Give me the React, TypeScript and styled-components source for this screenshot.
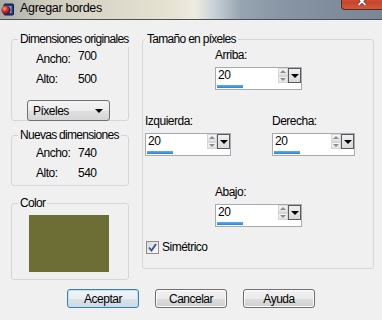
import styled, { createGlobalStyle } from 'styled-components'

const GlobalStyle = createGlobalStyle`
  html, body {
    margin: 0;
    padding: 0;
    background: #f0f0f0;
  }
  body {
    font-family: "Liberation Sans", Arial, sans-serif;
    font-size: 12px;
    letter-spacing: -0.5px;
    color: #000;
  }
  * {
    box-sizing: border-box;
  }
`;

const Window = styled.div`
  width: 382px;
  height: 320px;
  overflow: hidden;
  display: flex;
  flex-direction: column;
  background: #f0f0f0;
`;

const TitleBar = styled.div`
  flex: none;
  height: 20px;
  display: flex;
  align-items: flex-start;
  padding-left: 1px;
  border-bottom: 1px solid #4a5157;
  background: linear-gradient(90deg, #a9aca6 0%, #cfcdbf 12%, #dcd9ca 30%, #e6e3d3 45%, #eeece0 51%, #c9d1d7 56%, #97a5b2 63%, #8694a3 75%, #7e8c9b 88%, #7a8796 100%);
`;

const AppIcon = styled.svg`
  margin-top: 3px;
  margin-right: 6px;
  flex: none;
`;

const TitleText = styled.span`
  margin-top: 1px;
  font-size: 12.5px;
  letter-spacing: -0.3px;
  line-height: 14px;
`;

const CloseButton = styled.div`
  margin-left: auto;
  margin-top: -8px;
  width: 41px;
  height: 18px;
  border: 1px solid #5c2a20;
  border-right: none;
  border-radius: 0 0 0 4px;
  background: linear-gradient(#e08a73, #c7442b 55%, #d0593d);
  display: flex;
  align-items: center;
  justify-content: center;
`;

const Body = styled.div`
  display: grid;
  grid-template-columns: 118px 232px;
  column-gap: 13px;
  padding: 12px 0 0 11px;
`;

const Column = styled.div`
  display: flex;
  flex-direction: column;
`;

const Group = styled.fieldset<{ $h: number; $pad: string; $mt?: number }>`
  margin: ${(p) => p.$mt ?? 0}px 0 0 0;
  height: ${(p) => p.$h}px;
  padding: ${(p) => p.$pad};
  border: 1px solid #d3d7da;
  border-radius: 3px;
  min-width: 0;
`;

const Legend = styled.legend`
  padding: 0 2px;
  line-height: 15px;
  letter-spacing: -0.7px;
  white-space: nowrap;
`;

const InfoRow = styled.div`
  display: grid;
  grid-template-columns: 42px auto;
  height: 20px;
  margin-left: 18px;
  line-height: 15px;
`;

const Value = styled.span<{ $up?: number }>`
  margin-top: ${(p) => -(p.$up ?? 0)}px;
`;

const Select = styled.div`
  margin: 8px 0 0 9px;
  width: 83px;
  height: 21px;
  border: 1px solid #707070;
  border-radius: 3px;
  background: linear-gradient(#f4f4f4 0%, #ececec 50%, #e0e0e0 51%, #d6d6d6 100%);
  display: flex;
  align-items: center;
  padding-left: 5px;
  &::after {
    content: '';
    margin-left: auto;
    margin-right: 6px;
    border-left: 4px solid transparent;
    border-right: 4px solid transparent;
    border-top: 4px solid #000;
  }
`;

const Swatch = styled.div<{ $color: string }>`
  margin-left: 11px;
  width: 80px;
  height: 57px;
  background: ${(p) => p.$color};
`;

const Field = styled.div<{ $ml?: number; $mt?: number }>`
  display: flex;
  flex-direction: column;
  margin-left: ${(p) => p.$ml ?? 0}px;
  margin-top: ${(p) => p.$mt ?? 0}px;
`;

const FieldLabel = styled.span`
  line-height: 15px;
  margin-bottom: 4px;
`;

const FieldRow = styled.div`
  display: flex;
  gap: 41px;
  margin-top: 24px;
`;

const Spin = styled.div<{ $w: number }>`
  width: ${(p) => p.$w}px;
  height: 23px;
  border: 1px solid #a5abb2;
  background: #fff;
  display: flex;
  flex-direction: column;
`;

const SpinTop = styled.div`
  display: flex;
  height: 15px;
`;

const SpinText = styled.span`
  flex: 1;
  padding-left: 2px;
  line-height: 15px;
`;

const Arrows = styled.div`
  width: 10px;
  display: flex;
  flex-direction: column;
`;

const ArrowBtn = styled.div<{ $down?: boolean }>`
  flex: 1;
  border: 1px solid #d6d6d6;
  background: linear-gradient(#f7f7f7, #e2e2e2);
  display: flex;
  align-items: center;
  justify-content: center;
  &::after {
    content: '';
    border-left: 3px solid transparent;
    border-right: 3px solid transparent;
    ${(p) => (p.$down ? 'border-top: 3px solid #8c8c8c;' : 'border-bottom: 3px solid #8c8c8c;')}
  }
`;

const DropBtn = styled.div`
  width: 13px;
  border: 1px solid #5a5a5a;
  background: linear-gradient(#f0f0f0, #d9d9d9);
  display: flex;
  align-items: center;
  justify-content: center;
  &::after {
    content: '';
    border-left: 4px solid transparent;
    border-right: 4px solid transparent;
    border-top: 4px solid #000;
  }
`;

const Bar = styled.div<{ $w: number }>`
  margin: 2px 0 0 1px;
  width: ${(p) => p.$w}px;
  height: 3px;
  background: linear-gradient(#62adf2, #2d7fdb);
`;

const CheckRow = styled.label`
  display: flex;
  align-items: center;
  gap: 3px;
  margin: 13px 0 0 1px;
  line-height: 15px;
`;

const CheckBox = styled.span`
  width: 13px;
  height: 13px;
  border: 1px solid #8e8f8f;
  background: linear-gradient(135deg, #d8d8d8, #fbfbfb);
  display: flex;
  align-items: center;
  justify-content: center;
`;

const Footer = styled.div`
  display: flex;
  justify-content: center;
  gap: 16px;
  padding-top: 9px;
`;

const Button = styled.button<{ $default?: boolean }>`
  width: 72px;
  height: 19px;
  padding: 0;
  font: inherit;
  letter-spacing: inherit;
  color: #000;
  border: 1px solid ${(p) => (p.$default ? '#3c7fb1' : '#707070')};
  border-radius: 3px;
  background: ${(p) =>
    p.$default
      ? 'linear-gradient(#f0f5f9 0%, #e8eef3 50%, #dae3ea 51%, #cfd9e1 100%)'
      : 'linear-gradient(#f2f2f2 0%, #ebebeb 50%, #dddddd 51%, #cfcfcf 100%)'};
  box-shadow: inset 0 0 0 1px ${(p) => (p.$default ? '#bfe1f5' : '#fcfcfc')};
`;

const SpinBox = ({ value, width, bar }: { value: string; width: number; bar: number }) => (
  <Spin $w={width}>
    <SpinTop>
      <SpinText>{value}</SpinText>
      <Arrows>
        <ArrowBtn />
        <ArrowBtn $down />
      </Arrows>
      <DropBtn />
    </SpinTop>
    <Bar $w={bar} />
  </Spin>
);

const App = () => {
  return (
    <Window>
      <GlobalStyle />
      <TitleBar>
        <AppIcon width="13" height="13" viewBox="0 0 13 13">
          <defs>
            <radialGradient id="ball" cx="0.35" cy="0.35" r="0.7">
              <stop offset="0" stopColor="#ff9a6a" />
              <stop offset="0.5" stopColor="#c0282a" />
              <stop offset="1" stopColor="#3a1030" />
            </radialGradient>
          </defs>
          <rect x="3" y="1" width="9.5" height="11" rx="1" fill="#1f3d7a" stroke="#0d1f45" />
          <rect x="5" y="3" width="5.5" height="7" fill="#7fa2d8" />
          <circle cx="5" cy="7" r="4.6" fill="url(#ball)" />
        </AppIcon>
        <TitleText>Agregar bordes</TitleText>
        <CloseButton>
          <svg width="10" height="9" viewBox="0 0 10 9">
            <path d="M1.5 1 L8.5 8 M8.5 1 L1.5 8" stroke="#5a1a10" strokeWidth="3" />
            <path d="M1.5 1 L8.5 8 M8.5 1 L1.5 8" stroke="#fff" strokeWidth="1.8" />
          </svg>
        </CloseButton>
      </TitleBar>

      <Body>
        <Column>
          <Group $h={89} $pad="5px 6px 0 6px">
            <Legend>Dimensiones originales</Legend>
            <InfoRow>
              <span>Ancho:</span>
              <Value $up={3}>700</Value>
            </InfoRow>
            <InfoRow>
              <span>Alto:</span>
              <Value>500</Value>
            </InfoRow>
            <Select>Píxeles</Select>
          </Group>
          <Group $h={58} $mt={7} $pad="3px 6px 0 6px">
            <Legend>Nuevas dimensiones</Legend>
            <InfoRow>
              <span>Ancho:</span>
              <Value>740</Value>
            </InfoRow>
            <InfoRow>
              <span>Alto:</span>
              <Value>540</Value>
            </InfoRow>
          </Group>
          <Group $h={84} $mt={10} $pad="4px 6px 0 6px">
            <Legend>Color</Legend>
            <Swatch $color="#6c6e35" />
          </Group>
        </Column>

        <Group $h={237} $pad="1px 2px 0 2px">
          <Legend>Tamaño en píxeles</Legend>
          <Field $ml={70}>
            <FieldLabel>Arriba:</FieldLabel>
            <SpinBox value="20" width={87} bar={26} />
          </Field>
          <FieldRow>
            <Field>
              <FieldLabel>Izquierda:</FieldLabel>
              <SpinBox value="20" width={86} bar={26} />
            </Field>
            <Field>
              <FieldLabel>Derecha:</FieldLabel>
              <SpinBox value="20" width={83} bar={26} />
            </Field>
          </FieldRow>
          <Field $ml={70} $mt={29}>
            <FieldLabel>Abajo:</FieldLabel>
            <SpinBox value="20" width={87} bar={26} />
          </Field>
          <CheckRow>
            <CheckBox>
              <svg width="9" height="9" viewBox="0 0 9 9">
                <path d="M1 4.5 L3.5 7.5 L8 1" fill="none" stroke="#3b4f8f" strokeWidth="1.8" />
              </svg>
            </CheckBox>
            Simétrico
          </CheckRow>
        </Group>
      </Body>

      <Footer>
        <Button $default>Aceptar</Button>
        <Button>Cancelar</Button>
        <Button>Ayuda</Button>
      </Footer>
    </Window>
  );
};

export default App;
